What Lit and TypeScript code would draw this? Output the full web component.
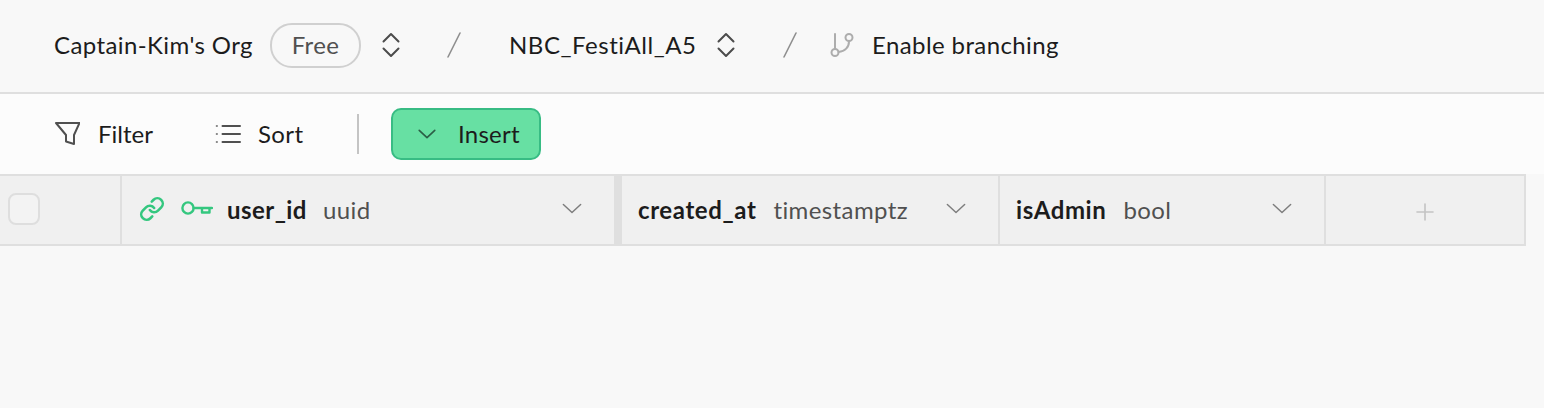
import { LitElement, html, css } from 'lit';
import { customElement } from 'lit/decorators.js';

const chevron = html`<svg class="chev" viewBox="0 0 22 12"><path d="M1.500 1.500 11 10.500 20.500 1.500" /></svg>`;
const updown = html`<svg class="updown" viewBox="0 0 20 26"><path d="M2.500 9.500 10 2 17.500 9.500M2.500 16.500 10 24 17.500 16.500" /></svg>`;
const slash = html`<svg class="slash" viewBox="0 0 14 26"><path d="M13 1 1 25" /></svg>`;

@customElement('app-root')
export class AppRoot extends LitElement {
  static styles = css`
    :host {
      display: block;
      width: 1544px;
      height: 408px;
      background: #f8f8f8;
      font-family: Lato, "Liberation Sans", sans-serif;
      font-size: 24px;
      letter-spacing: 0.4px;
      font-variant-ligatures: none;
      color: #1c1c1c;
      overflow: hidden;
    }
    svg { fill: none; stroke-linecap: round; stroke-linejoin: round; flex: none; display: block; }

    .top {
      height: 92px;
      border-bottom: 2px solid #dfdfdf;
      display: flex;
      align-items: center;
      padding-left: 54px;
    }
    .top > * { position: relative; top: -1px; }
    .org { width: 216px; padding-bottom: 2px; }
    .badge {
      width: 87px;
      height: 39px;
      padding-bottom: 2px;
      border: 2px solid #d0d0d0;
      border-radius: 22px;
      display: flex;
      align-items: center;
      justify-content: center;
      color: #505050;
      margin-right: 20px;
    }
    .updown { width: 20px; height: 26px; stroke: #4c4c4c; stroke-width: 2; }
    .slash { width: 14px; height: 26px; stroke: #8f8f8f; stroke-width: 1.6; }
    .s1 { margin: 0 48px 0 46px; }
    .project { width: 207px; letter-spacing: 0.53px; padding-bottom: 2px; }
    .s2 { margin: 0 33px 0 47px; }
    .branch { width: 24px; height: 26px; stroke: #adadad; stroke-width: 2; margin-right: 18px; }
    .label { padding-bottom: 2px; }

    .bar {
      height: 80px;
      box-sizing: border-box;
      background: #fcfcfc;
      display: flex;
      align-items: center;
      padding-left: 54px;
    }
    .funnel { width: 26px; height: 26px; stroke: #505050; stroke-width: 2; margin-right: 18px; }
    .filter { width: 117px; letter-spacing: 0; padding-bottom: 1px; }
    .lines { width: 26px; height: 20px; stroke: #505050; stroke-width: 2; margin-right: 17px; }
    .sort { width: 99px; padding-bottom: 1px; }
    .divider { width: 2px; height: 40px; background: #c4c4c4; margin-right: 32px; }
    .insert {
      width: 150px;
      height: 52px;
      box-sizing: border-box;
      padding: 0 0 1px 25px;
      background: #67e0a3;
      border: 2px solid #38bc84;
      border-radius: 10px;
      display: flex;
      align-items: center;
      gap: 22px;
      letter-spacing: 0.25px;
    }
    .insert .chev { width: 18px; height: 10px; stroke: #2b5f46; stroke-width: 2; }

    .head {
      display: flex;
      width: 1526px;
      height: 72px;
      box-sizing: border-box;
      background: #f0f0f0;
      border-top: 2px solid #dfdfdf;
      border-bottom: 2px solid #dfdfdf;
    }
    .cell {
      box-sizing: border-box;
      display: flex;
      align-items: center;
      border-right: 2px solid #dfdfdf;
    }
    .check { width: 122px; padding-left: 8px; padding-bottom: 2px; }
    .box {
      width: 32px;
      height: 32px;
      box-sizing: border-box;
      border: 2px solid #dedede;
      border-radius: 8px;
      background: #f3f3f3;
    }
    .user { width: 500px; border-right-width: 8px; padding-left: 17px; }
    .created { width: 378px; padding-left: 16px; }
    .admin { width: 326px; padding-left: 16px; }
    .add { width: 200px; justify-content: center; }
    .link { width: 26px; height: 26px; stroke: #34c77f; stroke-width: 2.4; margin-right: 16px; position: relative; top: -1px; }
    .key { width: 32px; height: 16px; stroke: #34c77f; stroke-width: 2.4; margin-right: 14px; position: relative; top: -2px; }
    b { font-weight: 700; letter-spacing: 0.6px; margin-right: 17px; padding-bottom: 2px; }
    .user b { letter-spacing: 0.45px; margin-right: 16px; }
    .type { color: #505050; padding-bottom: 2px; }
    .cell .chev {
      width: 20px;
      height: 11px;
      stroke: #7d7d7d;
      stroke-width: 1.6;
      margin-left: auto;
      position: relative;
      top: -2px;
    }
    .user .chev { margin-right: 32px; }
    .created .chev { margin-right: 32px; }
    .admin .chev { margin-right: 32px; }
    .plus { width: 18px; height: 18px; stroke: #c4c4c4; stroke-width: 1.6; margin-top: 4px; }
  `;

  render() {
    return html`
      <div class="top">
        <span class="org">Captain-Kim's Org</span>
        <span class="badge">Free</span>
        ${updown}
        <span class="s1">${slash}</span>
        <span class="project">NBC_FestiAll_A5</span>
        ${updown}
        <span class="s2">${slash}</span>
        <svg class="branch" viewBox="0 0 24 26">
          <path d="M5 2V17" />
          <circle cx="5" cy="20.500" r="3.500" />
          <circle cx="19" cy="5.500" r="3.500" />
          <path d="M19 9.500C19 15 15 19.500 8.500 20" />
        </svg>
        <span class="label">Enable branching</span>
      </div>
      <div class="bar">
        <svg class="funnel" viewBox="0 0 26 26">
          <path d="M2 2H25.500L20 14V23L12 20.500V14Z" />
        </svg>
        <span class="filter">Filter</span>
        <svg class="lines" viewBox="0 0 26 20">
          <path d="M7.500 2H25M7.500 10H25M7.500 18H25" />
          <path stroke-opacity="0.7" d="M1.700 2H2M1.700 10H2M1.700 18H2" />
        </svg>
        <span class="sort">Sort</span>
        <span class="divider"></span>
        <div class="insert">${chevron}<span>Insert</span></div>
      </div>
      <div class="head">
        <div class="cell check"><div class="box"></div></div>
        <div class="cell user">
          <svg class="link" viewBox="0 0 24 24">
            <path d="M10 13a5 5 0 0 0 7.540.540l3-3a5 5 0 0 0-7.070-7.070l-1.720 1.710" />
            <path d="M14 11a5 5 0 0 0-7.540-.540l-3 3a5 5 0 0 0 7.070 7.070l1.710-1.710" />
          </svg>
          <svg class="key" viewBox="0 0 32 16">
            <circle cx="7" cy="8" r="5.600" />
            <path d="M12.600 8H31M21 8V12.500H28.500V8" />
          </svg>
          <b>user_id</b><span class="type">uuid</span>
          ${chevron}
        </div>
        <div class="cell created"><b>created_at</b><span class="type">timestamptz</span>${chevron}</div>
        <div class="cell admin"><b>isAdmin</b><span class="type">bool</span>${chevron}</div>
        <div class="cell add">
          <svg class="plus" viewBox="0 0 18 18"><path d="M9 1V17M1 9H17" /></svg>
        </div>
      </div>
    `;
  }
}
